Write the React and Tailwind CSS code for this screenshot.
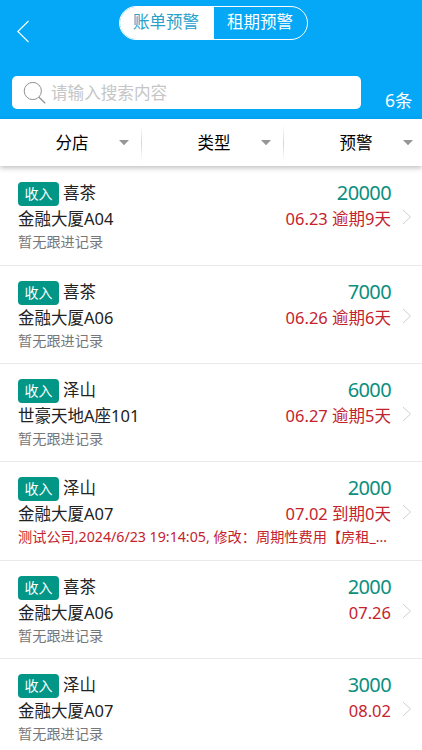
import { useState } from "react";
import clsx from "clsx";

const TABS = ["账单预警", "租期预警"];
const FILTERS = ["分店", "类型", "预警"];

const BILLS = [
  { id: 1, name: "喜茶", place: "金融大厦A04", amount: 20000, due: "06.23 逾期9天" },
  { id: 2, name: "喜茶", place: "金融大厦A06", amount: 7000, due: "06.26 逾期6天" },
  { id: 3, name: "泽山", place: "世豪天地A座101", amount: 6000, due: "06.27 逾期5天" },
  {
    id: 4,
    name: "泽山",
    place: "金融大厦A07",
    amount: 2000,
    due: "07.02 到期0天",
    record: "测试公司,2024/6/23 19:14:05, 修改：周期性费用【房租_…",
  },
  { id: 5, name: "喜茶", place: "金融大厦A06", amount: 2000, due: "07.26" },
  { id: 6, name: "泽山", place: "金融大厦A07", amount: 3000, due: "08.02" },
];

const Header = ({ count }) => {
  const [tab, setTab] = useState(0);

  return (
    <header className="h-[119px] bg-[#05a8f6] text-white">
      <div className="flex h-[76px] items-start">
        <button className="ml-4 mt-5 w-[103px]">
          <svg width="14" height="23" viewBox="0 0 14 23" fill="none" stroke="currentColor">
            <path d="M12.5 1 1.8 11.5 12.5 22" strokeWidth="1.1" />
          </svg>
        </button>
        <div className="mt-1.5 flex h-[34px] w-[189px] overflow-hidden rounded-full border border-white">
          {TABS.map((label, i) => (
            <button
              key={label}
              onClick={() => setTab(i)}
              className={clsx(
                "flex-1 pb-px text-[16.5px] leading-none",
                tab === i ? "bg-white pr-0.5 text-[#2a9fc9]" : "pr-px"
              )}
            >
              {label}
            </button>
          ))}
        </div>
      </div>
      <div className="flex pl-3">
        <label className="flex h-[33px] w-[349px] items-center rounded-[5px] bg-white pl-[11px]">
          <svg width="24" height="24" viewBox="0 0 24 24" fill="none" stroke="#929292">
            <circle cx="9.8" cy="10" r="8.6" strokeWidth="1" />
            <path d="m16 16.2 6.2 6" strokeWidth="1.2" />
          </svg>
          <input
            placeholder="请输入搜索内容"
            className="ml-1 w-64 text-[16.6px] leading-6 text-black outline-none placeholder:text-[#c6c6c6]"
          />
        </label>
        <span className="ml-6 mt-3 text-[17.5px] leading-6">{count}条</span>
      </div>
    </header>
  );
};

const FilterBar = () => (
  <div className="relative flex h-[47px] bg-white shadow-[0_2px_5px_rgba(0,0,0,0.25)]">
    {FILTERS.map((label, i) => (
      <button key={label} className="flex w-[142px] shrink-0 items-center text-[16.5px] text-black">
        <span className="flex-1 pl-0.5 pt-0.5 text-center">{label}</span>
        <svg width="10" height="6" viewBox="0 0 10 6" className="-ml-[23px] mr-3">
          <path d="M0 0h10L5 5.2z" fill="#969696" />
        </svg>
        <span
          className={clsx(
            "h-9 w-px",
            i < 2 && "bg-linear-to-b from-white via-[#d6d6d6] to-white"
          )}
        />
      </button>
    ))}
  </div>
);

const BillRow = ({ bill }) => (
  <li className="flex h-[98.3px] border-b border-[#e9e9e9] pl-[18px]">
    <div className="w-[373px] pt-[15px]">
      <div className="flex h-6 items-center justify-between">
        <div className="flex items-center">
          <span className="flex h-6 w-[41px] items-center justify-center rounded bg-[#029687] text-[14px] leading-none text-white">
            收入
          </span>
          <span className="-mt-0.5 ml-1 text-[16.5px] leading-6 text-[#222]">{bill.name}</span>
        </div>
        <span className="-mt-0.5 text-[20px] leading-6 tracking-[-0.6px] text-[#0b8f7e]">
          {bill.amount}
        </span>
      </div>
      <div className="mt-px flex justify-between text-[16.5px] leading-6">
        <span className="text-[#222]">{bill.place}</span>
        <span className="text-[#c4232d]">{bill.due}</span>
      </div>
      <p
        className={clsx(
          "-mt-px whitespace-nowrap text-[14.2px] leading-6",
          bill.record ? "text-[#c4232d]" : "text-[#777]"
        )}
      >
        {bill.record || "暂无跟进记录"}
      </p>
    </div>
    <svg
      width="10"
      height="16"
      viewBox="0 0 10 16"
      fill="none"
      stroke="#cfcfcf"
      className="ml-[11px] mt-[42px]"
    >
      <path d="m1 1 7.5 7L1 15" />
    </svg>
  </li>
);

const App = () => (
  <main className="h-[750px] w-[422px] overflow-hidden bg-white font-['Noto_Sans','Noto_Sans_CJK_SC',sans-serif]">
    <Header count={BILLS.length} />
    <FilterBar />
    <ul className="pt-[1.4px]">
      {BILLS.map((bill) => (
        <BillRow key={bill.id} bill={bill} />
      ))}
    </ul>
  </main>
);

export default App;
